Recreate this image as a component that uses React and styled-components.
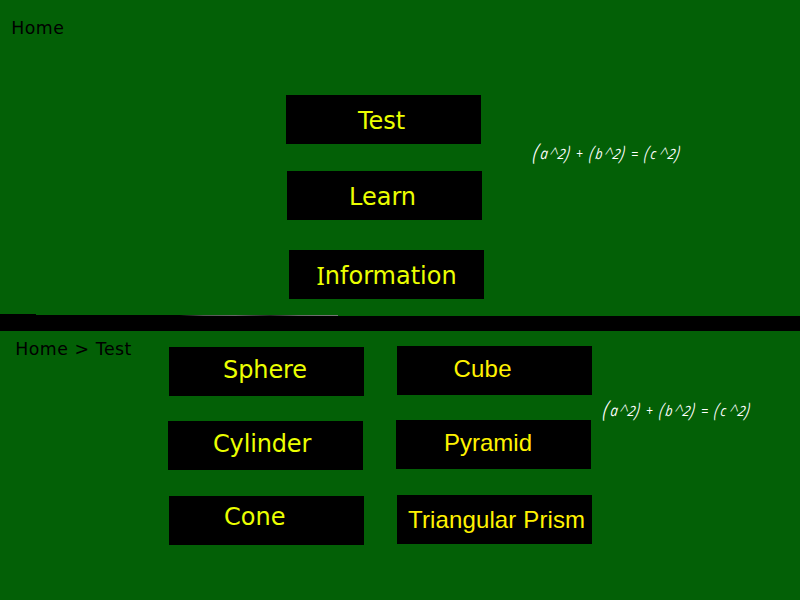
import React from "react";
import styled, { createGlobalStyle } from "styled-components";

const GlobalStyle = createGlobalStyle`
  body { margin: 0; background: #036006; }
`;

const Page = styled.div`
  width: 800px;
  height: 600px;
  overflow: hidden;
  background: #036006;
  font-family: "DejaVu Sans", sans-serif;
`;

const HomeScreen = styled.section`
  display: grid;
  grid-template-columns: 286px 198px 1fr;
  height: 314px;
`;

const TestScreen = styled.section`
  display: grid;
  grid-template-columns: 168px 228px 196px 1fr;
  height: 269px;
`;

const Breadcrumb = styled.div`
  padding: ${(p) => p.$pad};
  font-size: 17.33px;
  line-height: 20px;
  letter-spacing: 0.5px;
  word-spacing: 0.2px;
  color: #000;
  white-space: pre;
`;

const Menu = styled.nav`
  display: flex;
  flex-direction: column;
  align-items: flex-start;
  padding-top: ${(p) => p.$top}px;
`;

const MenuButton = styled.button`
  box-sizing: border-box;
  display: flex;
  align-items: flex-start;
  flex: none;
  width: 195px;
  height: 49px;
  margin: 0 0 ${(p) => p.$gap || 0}px ${(p) => p.$shift || 0}px;
  padding: ${(p) => p.$top}px 0 0 ${(p) => p.$left}px;
  border: 0;
  background: #000;
  color: ${(p) => (p.$arial ? "#fff200" : "#ebff00")};
  font-family: ${(p) => (p.$arial ? '"Liberation Sans"' : '"DejaVu Sans"')}, sans-serif;
  font-size: 24px;
  line-height: 28px;
  letter-spacing: ${(p) => p.$track || "0"};
  white-space: nowrap;
`;

const SerifCap = styled.span`
  font-family: "Noto Sans", sans-serif;
  font-size: 24.5px;
`;

const Formula = styled.div`
  display: flex;
  align-items: baseline;
  padding: ${(p) => p.$pad};
  color: #fff;
  font-family: "Open Sans", sans-serif;
  font-weight: 400;
  font-style: italic;
  line-height: 24px;
`;

const Glyph = styled.span`
  flex: none;
  width: ${(p) => p.$w}px;
  font-size: ${(p) => p.$size}px;
  font-weight: ${(p) => (p.$light ? 300 : 400)};
  font-style: ${(p) => (p.$upright ? "normal" : "italic")};
  white-space: pre;
  transform-origin: 0 17px;
  transform: translateY(${(p) => p.$dy || 0}px) skewX(${(p) => p.$skew || 0}deg)
    scaleX(${(p) => p.$sx || 0.8});
`;

const Divider = styled.div`
  display: block;
  height: 17px;
  line-height: 0;
`;

const term = (letter, size, first) => [
  { c: "(", w: first ? 7 : 6, size: first ? 23 : 20, skew: -12, sx: 0.65, dy: 1 },
  { c: letter, w: 8.5, size, skew: -6, sx: 0.85, dy: -0.5 },
  { c: "^", w: 8.5, size: 16, skew: -10, sx: 1, dy: 0, upright: true, light: true },
  { c: "2", w: 8, size: 14, skew: -12, sx: 0.95, dy: -0.5 },
  { c: ")", w: 11, size: 20, skew: -12, sx: 0.65, dy: 1 },
];

const glyphs = [
  ...term("a", 15.5, true),
  { c: "+", w: 13, size: 14, sx: 0.85, dy: 0 },
  ...term("b", 14.5),
  { c: "=", w: 13, size: 14, sx: 0.9, dy: 0 },
  ...term("c", 14.5),
];

function Pythagoras({ pad }) {
  return (
    <Formula $pad={pad}>
      {glyphs.map((g, i) => (
        <Glyph
          key={i}
          $w={g.w}
          $size={g.size}
          $skew={g.skew}
          $sx={g.sx}
          $dy={g.dy}
          $upright={g.upright}
          $light={g.light}
        >
          {g.c}
        </Glyph>
      ))}
    </Formula>
  );
}

export default function App() {
  return (
    <Page>
      <GlobalStyle />
      <HomeScreen>
        <Breadcrumb $pad="18px 0 0 11.2px">Home</Breadcrumb>
        <Menu $top={95}>
          <MenuButton $top={12} $left={72} $gap={27}>Test</MenuButton>
          <MenuButton $top={12} $left={62} $gap={30} $shift={1}>Learn</MenuButton>
          <MenuButton $top={12} $left={27.5} $shift={3}>
            <SerifCap>I</SerifCap>nformation
          </MenuButton>
        </Menu>
        <Pythagoras pad="138px 0 0 49px" />
      </HomeScreen>
      <Divider>
        <svg width="800" height="17" viewBox="0 0 800 17">
          <defs>
            <linearGradient id="edge" x1="180" x2="338" y1="0" y2="0" gradientUnits="userSpaceOnUse">
              <stop offset="0" stopColor="#000" />
              <stop offset="0.15" stopColor="#555" />
              <stop offset="0.35" stopColor="#666" />
              <stop offset="0.57" stopColor="#222" />
              <stop offset="0.75" stopColor="#666" />
              <stop offset="1" stopColor="#777" />
            </linearGradient>
          </defs>
          <path d="M0 0H36V1H338V2H800V17H0Z" fill="#000" />
          <path d="M180 1H338V2H180Z" fill="url(#edge)" />
        </svg>
      </Divider>
      <TestScreen>
        <Breadcrumb $pad="8px 0 0 15.2px">Home &gt; Test</Breadcrumb>
        <Menu $top={16}>
          <MenuButton $top={9} $left={54} $gap={25} $shift={1} $track="-0.1px">Sphere</MenuButton>
          <MenuButton $top={9} $left={45} $gap={26} $track="-0.15px">Cylinder</MenuButton>
          <MenuButton $top={7} $left={55} $shift={1}>Cone</MenuButton>
        </Menu>
        <Menu $top={15}>
          <MenuButton $arial $top={9} $left={56.5} $gap={25} $shift={1} $track="0.2px">Cube</MenuButton>
          <MenuButton $arial $top={9} $left={48} $gap={26}>Pyramid</MenuButton>
          <MenuButton $arial $top={11} $left={11} $shift={1} $track="0.13px">Triangular Prism</MenuButton>
        </Menu>
        <Pythagoras pad="64px 0 0 11px" />
      </TestScreen>
    </Page>
  );
}
